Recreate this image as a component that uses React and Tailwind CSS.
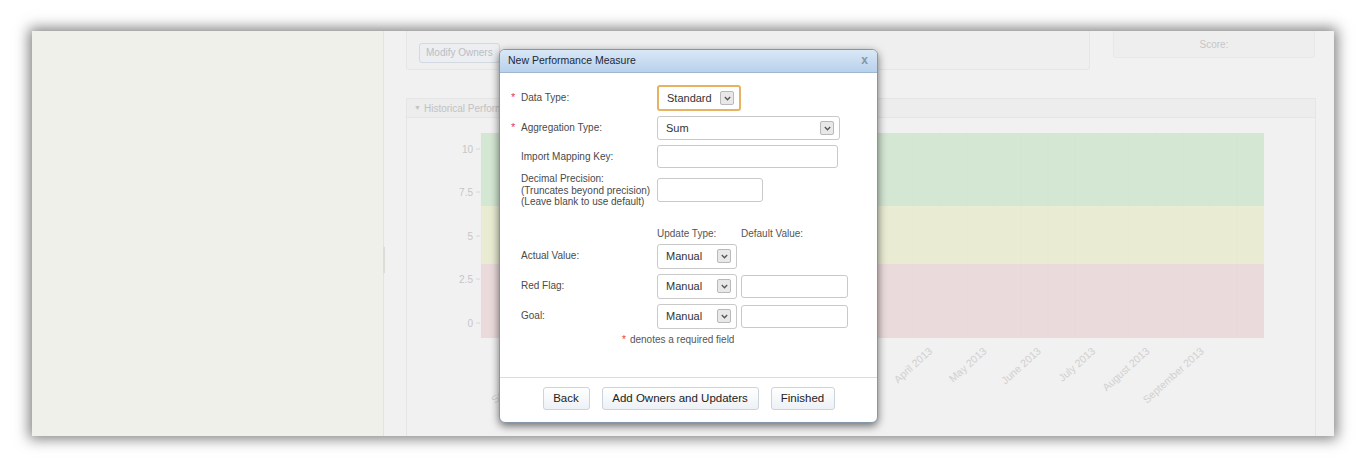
import React from 'react';

const months = [
  'September 2012', 'October 2012', 'November 2012', 'December 2012', 'January 2013',
  'February 2013', 'March 2013', 'April 2013', 'May 2013', 'June 2013', 'July 2013',
  'August 2013', 'September 2013',
];

const yTicks = [
  { label: '10', y: 34.5 },
  { label: '7.5', y: 77.5 },
  { label: '5', y: 121.5 },
  { label: '2.5', y: 164.5 },
  { label: '0', y: 208.5 },
];

const Chevron = () => (
  <svg width="7" height="5" viewBox="0 0 7 5">
    <path d="M0.8 1 L3.5 3.8 L6.2 1" fill="none" stroke="#555" strokeWidth="1.3" />
  </svg>
);

const Select = ({ value, width, height, focused }) => (
  <div
    className={`flex items-center justify-between bg-white rounded-[3px] pl-[8px] pr-[5px] text-[11px] text-[#333] ${
      focused ? 'border-2 border-[#e7b261]' : 'border border-[#c9c9c9]'
    }`}
    style={{ width, height }}
  >
    <span>{value}</span>
    <span className="w-[14px] h-[14px] flex items-center justify-center border border-[#b9b9b9] bg-[#e8e8e8] rounded-[2px]">
      <Chevron />
    </span>
  </div>
);

const Input = ({ width, height }) => (
  <div className="bg-white border border-[#c9c9c9] rounded-[3px]" style={{ width, height }} />
);

const Row = ({ required, label, children, className = '' }) => (
  <div className={`flex items-center ${className}`}>
    <div className="w-[157px] flex items-center pl-[11px] text-[10px] leading-[11.5px] text-[#4a4a4a]">
      <span className="w-[10px] text-[#e0413a] text-[11px]">{required ? '*' : ''}</span>
      <div className="whitespace-nowrap">{label}</div>
    </div>
    {children}
  </div>
);

const Chart = () => (
  <svg width="908" height="318" className="block">
    <rect x="74" y="15" width="783" height="73" fill="#d4e7d3" />
    <rect x="74" y="88" width="783" height="58" fill="#e9ebd3" />
    <rect x="74" y="146" width="783" height="74" fill="#eadadb" />
    {Array.from({ length: 29 }).map((_, i) => (
      <line key={i} x1={74 + i * 27} y1="15" x2={74 + i * 27} y2="220" stroke="rgba(0,0,0,0.012)" strokeWidth="1" />
    ))}
    {yTicks.map((t) => (
      <g key={t.label}>
        <text x="66" y={t.y} textAnchor="end" fontSize="10" fill="#c6c6c6" fontFamily="Liberation Sans, sans-serif">
          {t.label}
        </text>
        <line x1="69" y1={t.y - 3.5} x2="73" y2={t.y - 3.5} stroke="#d8d8d8" />
      </g>
    ))}
    {months.map((m, i) => {
      const x = 146 + i * 54.3;
      return (
        <text
          key={m + i}
          x={x}
          y="234"
          textAnchor="end"
          fontSize="10.5"
          fill="#d0d0d0"
          fontFamily="Liberation Sans, sans-serif"
          transform={`rotate(-42 ${x} 234)`}
        >
          {m}
        </text>
      );
    })}
  </svg>
);

const Dialog = () => (
  <div className="absolute left-[467px] top-[18px] w-[379px] h-[374px] flex flex-col bg-white border border-[#8796a5] rounded-[6px] shadow-[0_3px_9px_rgba(0,0,0,0.55)] overflow-hidden font-['Liberation_Sans',sans-serif]">
    <div className="h-[23px] flex items-center justify-between pl-[8px] pr-[9px] bg-gradient-to-b from-[#d9e8f7] to-[#b8d1ec] border-b border-[#9fb6cf]">
      <span className="text-[10.5px] text-[#1d2935]">New Performance Measure</span>
      <span className="text-[12px] font-bold text-[#8796a4] -mt-[3px]">x</span>
    </div>
    <div className="flex-1 pt-[12px]">
      <Row required label="Data Type:">
        <Select value="Standard" width={84} height={26} focused />
      </Row>
      <Row required label="Aggregation Type:" className="mt-[5px]">
        <Select value="Sum" width={183} height={24} />
      </Row>
      <Row label="Import Mapping Key:" className="mt-[5px]">
        <Input width={181} height={23} />
      </Row>
      <Row
        className="mt-[5px]"
        label={
          <>
            <div>Decimal Precision:</div>
            <div>(Truncates beyond precision)</div>
            <div>(Leave blank to use default)</div>
          </>
        }
      >
        <Input width={106} height={24} />
      </Row>
      <div className="flex mt-[20px] text-[10px] leading-[12px] text-[#555]">
        <div className="w-[157px]" />
        <div className="w-[84px]">Update Type:</div>
        <div>Default Value:</div>
      </div>
      <Row label="Actual Value:" className="mt-[4px]">
        <Select value="Manual" width={80} height={25} />
      </Row>
      <Row label="Red Flag:" className="mt-[5px]">
        <Select value="Manual" width={80} height={25} />
        <div className="ml-[4px]">
          <Input width={107} height={23} />
        </div>
      </Row>
      <Row label="Goal:" className="mt-[5px]">
        <Select value="Manual" width={80} height={25} />
        <div className="ml-[4px]">
          <Input width={107} height={23} />
        </div>
      </Row>
      <div className="mt-[5px] ml-[122px] text-[10px] leading-[12px] text-[#555]">
        <span className="text-[#e0413a] mr-[4px]">*</span>denotes a required field
      </div>
    </div>
    <div className="h-[45px] border-t border-[#dcdcdc] flex justify-center items-start pt-[9px] gap-[12px] text-[11.5px] text-[#222]">
      <button className="w-[47px] h-[23px] rounded-[3px] border border-[#cbd3dc] bg-gradient-to-b from-white to-[#edf1f5]">Back</button>
      <button className="w-[157px] h-[23px] rounded-[3px] border border-[#cbd3dc] bg-gradient-to-b from-white to-[#edf1f5]">Add Owners and Updaters</button>
      <button className="w-[64px] h-[23px] rounded-[3px] border border-[#cbd3dc] bg-gradient-to-b from-white to-[#edf1f5]">Finished</button>
    </div>
  </div>
);

export default function App() {
  return (
    <div className="w-[1366px] h-[468px] bg-white overflow-hidden pt-[31px] pl-[32px] font-['Liberation_Sans',sans-serif]">
      <div className="relative w-[1302px] h-[405px] flex overflow-hidden shadow-[0_0_13px_3px_rgba(0,0,0,0.5)]">
        <div className="relative w-[352px] bg-[#f0f0eb] border-r border-[#e3e3df]">
          <div className="absolute right-[-2px] top-[216px] w-[2px] h-[26px] border-x border-[#dcdcd8]" />
        </div>
        <div className="flex-1 bg-[#f1f1f1] pl-[22px] pr-[18px]">
          <div className="flex gap-[23px]">
            <div className="w-[684px] h-[39px] bg-[#efefef] border-b border-x border-[#e6e6e6] rounded-b-[3px] pl-[12px] pt-[8px]">
              <div className="inline-flex items-center h-[20px] px-[6px] rounded-[3px] border border-[#d3d9e1] bg-[#eceef1] text-[10px] text-[#b9bec5]">
                Modify Owners
              </div>
            </div>
            <div className="w-[202px] h-[27px] bg-[#eeeeee] border-b border-x border-[#e8e8e8] rounded-b-[3px] flex items-center justify-center text-[10px] text-[#c6c6c6]">
              Score:
            </div>
          </div>
          <div className="mt-[28px] w-[910px] border-x border-[#e5e5e5]">
            <div className="h-[20px] flex items-center pl-[7px] bg-[#ededed] border-y border-[#e5e5e5] text-[10px] text-[#c2c2c2]">
              <span className="text-[7px] mr-[3px]">▼</span>
              Historical Performance
            </div>
            <Chart />
          </div>
        </div>
        <Dialog />
      </div>
    </div>
  );
}
